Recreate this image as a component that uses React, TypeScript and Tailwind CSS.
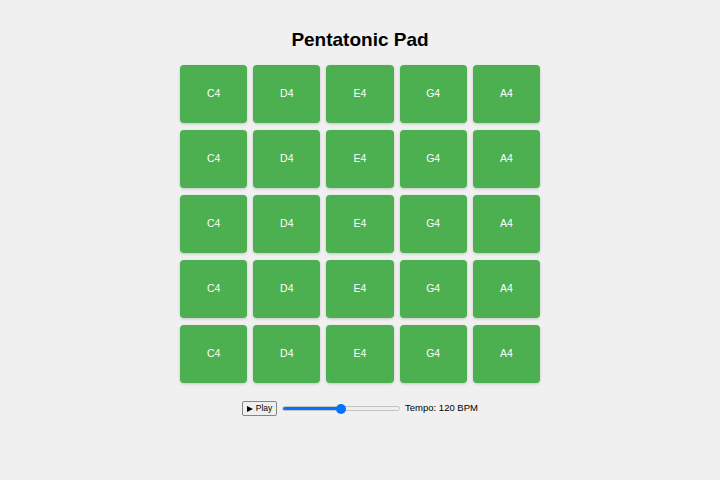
import React from 'react';

const NOTES = ['C4', 'D4', 'E4', 'G4', 'A4'];

export default function App() {
  const rows = [0, 1, 2, 3, 4];

  return (
    <div className="min-h-[480px] w-full bg-[#f0f0f0] flex flex-col items-center font-['Liberation_Sans',Arial,sans-serif]">
      <h1 className="mt-[29px] text-[19px] leading-[22px] font-bold text-black">Pentatonic Pad</h1>

      <div className="mt-[14px] grid grid-cols-5 w-[360px] gap-x-[6px] gap-y-[7px]">
        {rows.map(r =>
          NOTES.map(n => (
            <div
              key={r + n}
              className="h-[58px] rounded-[4px] bg-[#4caf50] shadow-[0_1px_3px_rgba(0,0,0,0.18)] flex items-center justify-center text-white text-[10.5px]"
            >
              {n}
            </div>
          ))
        )}
      </div>

      <div className="mt-[18px] flex items-center">
        <button className="h-[15px] w-[35px] border border-[#858585] rounded-[2px] bg-[#efefef] text-[8.5px] leading-none text-black flex items-center justify-center gap-[3px]">
          <span className="inline-block w-0 h-0 border-y-[3.5px] border-y-transparent border-l-[6px] border-l-black" />
          <span>Play</span>
        </button>
        <div className="ml-[5px] relative w-[118px] h-[10px] flex items-center">
          <div className="w-full h-[5px] rounded-full bg-[#efefef] border border-[#c4c4c4] overflow-hidden flex">
            <div className="w-1/2 h-full bg-[#0075ff]" />
          </div>
          <div className="absolute left-[54px] top-0 w-[10px] h-[10px] rounded-full bg-[#0075ff]" />
        </div>
        <span className="ml-[5px] text-[9.5px] text-black">Tempo: 120 BPM</span>
      </div>
    </div>
  );
}
